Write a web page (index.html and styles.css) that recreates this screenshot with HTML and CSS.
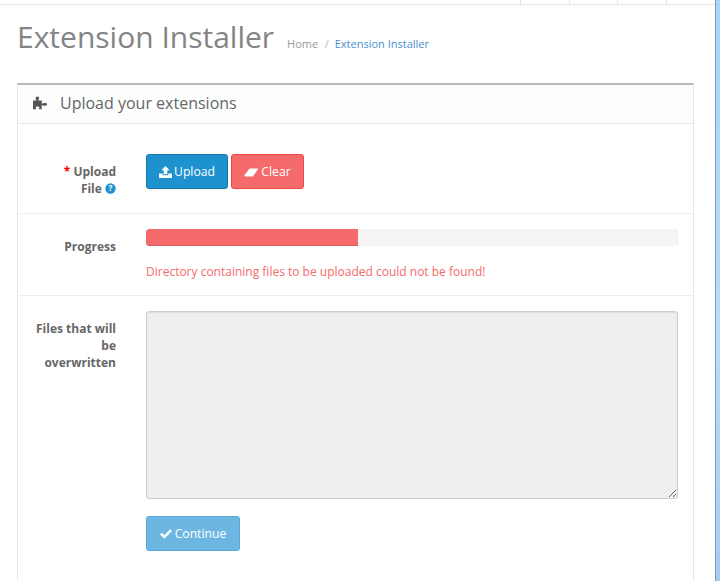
FILE: index.html
```html
<!DOCTYPE html>
<html lang="en">
<head>
<meta charset="utf-8">
<title>Extension Installer</title>
<link rel="stylesheet" href="styles.css">
</head>
<body>
<div class="page">
  <div class="content">
    <div class="topbar">
      <span class="tab"></span><span class="tab tab-narrow"></span><span class="tab"></span><span class="tab tab-last"></span>
    </div>
    <div class="page-header">
      <h1>Extension Installer</h1>
      <ul class="breadcrumb">
        <li><a class="crumb-home" href="#">Home</a></li>
        <li class="sep">/</li>
        <li><a href="#">Extension Installer</a></li>
      </ul>
    </div>
    <section class="panel">
      <header class="panel-heading">
        <svg class="puzzle" viewBox="0 0 18 16" width="15" height="14" aria-hidden="true">
          <path d="M0 5h3.600c.5 0 .6-.4.3-.8C3.300 3.500 3 3 3 2.400 3 1.300 4 .2 5.200.2s2.200 1.100 2.200 2.200c0 .6-.3 1.100-.9 1.800-.3.400-.2.800.3.800H10.500v3.400c0 .5.400.6.800.3.500-.4 1.500-.7 2.300-.7 1.600 0 3.400.6 3.400 1.700s-1.800 1.700-3.400 1.700c-.8 0-1.800-.3-2.300-.7-.4-.3-.8-.2-.8.300V15.500H7.500c-.5 0-.6-.4-.3-.8.300-.4.500-.8.500-1.200 0-.8-1.200-1.300-2.400-1.300S3.200 12.700 3.200 13.500c0 .4.200.8.500 1.200.3.400.2.800-.3.800H0z"/>
        </svg>
        <h2>Upload your extensions</h2>
      </header>
      <form class="form">
        <div class="row row-upload">
          <div class="label"><span class="req">*</span> Upload <span class="nowrap">File <svg class="help" viewBox="0 0 12 12" width="11" height="11" aria-hidden="true"><circle cx="6" cy="6" r="5.600"/><text x="6" y="9.200" text-anchor="middle">?</text></svg></span></div>
          <div class="control buttons">
            <button type="button" class="btn btn-blue">
              <svg class="ico" viewBox="0 0 14 13" width="13" height="12" aria-hidden="true"><path d="M7 0l4.500 4.500H9V9H5V4.500H2.500zM0 8h4v2h6V8h4v5H0z"/></svg><span>Upload</span>
            </button>
            <button type="button" class="btn btn-red">
              <svg class="ico" viewBox="0 0 15 9" width="14" height="9" aria-hidden="true"><path d="M6 .2h8c.8 0 1.200.5.800 1.100L9.500 8.800H2c-1.200 0-2-.8-1.400-1.700z"/></svg><span>Clear</span>
            </button>
          </div>
        </div>
        <div class="row row-progress">
          <div class="label">Progress</div>
          <div class="control">
            <div class="progress"><div class="progress-bar"></div></div>
            <p class="error">Directory containing files to be uploaded could not be found!</p>
          </div>
        </div>
        <div class="row row-files">
          <div class="label">Files that will be overwritten</div>
          <div class="control">
            <textarea class="files" disabled></textarea>
            <button type="button" class="btn btn-continue">
              <svg class="ico" viewBox="0 0 14 11" width="12" height="10" aria-hidden="true"><path d="M5 11L0 6l2-2 3 3 7-7 2 2z"/></svg><span>Continue</span>
            </button>
          </div>
        </div>
      </form>
    </section>
  </div>
  <div class="strip"></div>
</div>
</body>
</html>
```
FILE: styles.css
```css
* { box-sizing: border-box; }
html, body { margin: 0; height: 581px; overflow: hidden; }
body { font-family: "Open Sans", sans-serif; font-size: 12px; color: #666; background: #fff; }
.page { display: flex; height: 581px; }
.content { width: 715px; flex: none; overflow: hidden; }
.strip { flex: 1; background: linear-gradient(180deg, #a8d6f7 0%, #b8ddf9 60%, #a6cdf0 100%); border-left: 1px solid #7f9cc0; }

.topbar { height: 5px; border-bottom: 1px solid #e5e5e5; display: flex; justify-content: flex-end; padding-right: 48px; }
.tab { width: 49px; height: 4px; border-left: 1px solid #e5e5e5; }
.tab-narrow { width: 48px; }
.tab-last { width: 1px; }

.page-header { display: flex; align-items: baseline; padding: 13px 0 0 17px; height: 78px; }
h1 { margin: 0; font-size: 30px; line-height: 38px; font-weight: 400; color: #848484; }
.breadcrumb { list-style: none; margin: 0 0 0 13px; padding: 0; display: flex; gap: 6px; font-size: 11px; }
.breadcrumb a { color: #4a90d0; text-decoration: none; }
.breadcrumb .crumb-home { color: #999; }
.sep { color: #bbb; margin-left: .5px; }

.panel { margin: 0 21px 0 17px; border: 1px solid #e8e8e8; border-top: 2px solid #bbb; height: 560px; }
.panel-heading { display: flex; align-items: center; height: 39px; padding: 0 0 2px 15px; background: #fcfdfd; border-bottom: 1px solid #e8e8e8; }
.puzzle { fill: #555; flex: none; }
h2 { margin: 0 0 0 12px; font-size: 16px; line-height: 20px; font-weight: 400; color: #666; }

.row { display: flex; border-bottom: 1px solid #ededed; }
.row-upload { height: 90px; padding-top: 30px; }
.row-progress { height: 82px; padding-top: 15px; }
.row-files { border-bottom: 0; padding-top: 15px; }
.label { width: 98px; margin-right: 30px; padding: 9px 0 0 15px; text-align: right; font-weight: 700; line-height: 17px; color: #666; flex: none; }
.nowrap { white-space: nowrap; }
.req { color: #f00; }
.help { vertical-align: -1px; }
.help circle { fill: #1e91cf; }
.help text { fill: #fff; font-size: 9px; font-weight: 700; font-family: "Open Sans", sans-serif; }
.control { width: 532px; flex: none; }
.buttons { display: flex; gap: 3px; align-items: flex-start; }

.btn { display: flex; align-items: center; justify-content: center; gap: 2px; height: 35px; border-radius: 3px; border: 1px solid; font: 400 12.200px/1 "Open Sans", sans-serif; color: #fff; padding: 2px 0 0; }
.ico { fill: #fff; flex: none; margin-top: -1px; }
.btn-blue { width: 82px; background: #1e91cf; border-color: #1978ab; }
.btn-red { width: 73px; background: #f56b6b; border-color: #f24545; gap: 3px; }
.btn-continue { width: 94px; margin-top: 17px; background: #6cb7e2; border-color: #5ba8d8; gap: 3px; }

.progress { height: 17px; background: #f5f5f5; border-radius: 3px; overflow: hidden; border: 1px solid #efefef; border-width: 0 1px 0 0; }
.progress-bar { width: 212px; height: 17px; background: #f56b6b; border-bottom: 1px solid #d9595d; border-radius: 3px 0 0 3px; }
.error { margin: 17px 0 0; font-size: 12px; line-height: 17px; color: #f56b6b; }

.files { display: block; width: 532px; height: 188px; margin: 0; background: #eee; border: 1px solid #ccc; border-radius: 3px; box-shadow: inset 0 1px 1px rgba(0,0,0,.075); }
```
